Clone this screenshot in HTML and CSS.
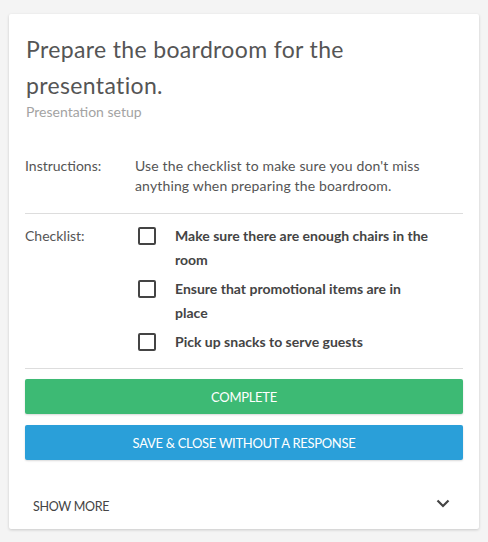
FILE: index.html
```html
<!DOCTYPE html>
<html>
<head>
<meta charset="utf-8">
<link rel="stylesheet" href="styles.css">
</head>
<body>
<div class="card">
  <h1 class="title">Prepare the boardroom for the presentation.</h1>
  <div class="subtitle">Presentation setup</div>
  <div class="row row-instructions">
    <div class="label">Instructions:</div>
    <div class="value">Use the checklist to make sure you don't miss anything when preparing the boardroom.</div>
  </div>
  <div class="row row-checklist">
    <div class="label">Checklist:</div>
    <ul class="checklist">
      <li class="item"><span class="box"></span><span class="item-text">Make sure there are enough chairs in the room</span></li>
      <li class="item"><span class="box"></span><span class="item-text">Ensure that promotional items are in place</span></li>
      <li class="item"><span class="box"></span><span class="item-text">Pick up snacks to serve guests</span></li>
    </ul>
  </div>
  <div class="actions">
    <button class="btn btn-green">COMPLETE</button>
    <button class="btn btn-blue">SAVE &amp; CLOSE WITHOUT A RESPONSE</button>
  </div>
  <div class="more">
    <span class="more-text">SHOW MORE</span>
    <svg class="chev" width="14" height="9" viewBox="0 0 14 9"><path d="M1.5 1.5 L7 7 L12.5 1.5" fill="none" stroke="#444" stroke-width="2.2"/></svg>
  </div>
</div>
</body>
</html>
```
FILE: styles.css
```css
* { box-sizing: border-box; }
body {
  margin: 0;
  background: #f4f4f4;
  padding: 14px 9px 13px 9px;
  font-family: Lato, "Open Sans", sans-serif;
  color: #555;
}
.card {
  background: #fff;
  border-radius: 2px;
  box-shadow: 0 1px 3px rgba(0,0,0,0.18);
  padding: 17px 16px 0 16px;
  height: 515px;
}
.title {
  margin: 0;
  font-weight: 400;
  font-size: 23px;
  line-height: 36px;
  color: #555;
  padding-left: 1px;
  letter-spacing: 0.35px;
}
.subtitle {
  font-size: 14px;
  color: #a3a3a3;
  line-height: 20px;
  margin-top: -1px;
  padding-left: 1px;
}
.row {
  display: flex;
  font-size: 14px;
}
.label {
  width: 110px;
  flex: none;
  color: #555;
}
.row-instructions {
  margin-top: 34px;
  line-height: 20px;
  padding-bottom: 17px;
  border-bottom: 1px solid #ddd;
}
.value { color: #555; letter-spacing: 0.15px; }
.row-checklist {
  padding-top: 10px;
  padding-bottom: 14px;
  border-bottom: 1px solid #ddd;
}
.row-checklist .label { line-height: 24px; }
.checklist {
  list-style: none;
  margin: 0;
  padding: 0;
  flex: 1;
}
.item {
  display: flex;
  align-items: flex-start;
  margin-bottom: 5px;
}
.item:last-child { margin-bottom: 0; }
.box {
  flex: none;
  width: 18px;
  height: 18px;
  border: 2px solid #444;
  border-radius: 2px;
  margin: 3px 19px 0 3px;
}
.item-text {
  font-weight: 700;
  line-height: 24px;
  color: #444;
  width: 257px;
}
.actions {
  display: flex;
  flex-direction: column;
  gap: 11px;
  margin-top: 10px;
}
.btn {
  border: none;
  border-radius: 2px;
  height: 35px;
  color: #fff;
  font-family: Lato, "Open Sans", sans-serif;
  font-size: 13px;
  letter-spacing: -0.3px;
  box-shadow: 0 1px 2px rgba(0,0,0,0.15);
}
.btn-green { background: #3dba74; }
.btn-blue { background: #2a9fd9; }
.more {
  display: flex;
  justify-content: space-between;
  align-items: center;
  margin-top: 39px;
  padding: 0 13px 0 8px;
}
.more-text {
  font-size: 12.5px;
  letter-spacing: -0.3px;
  color: #444;
}
.chev { margin-top: -6px; }
```
